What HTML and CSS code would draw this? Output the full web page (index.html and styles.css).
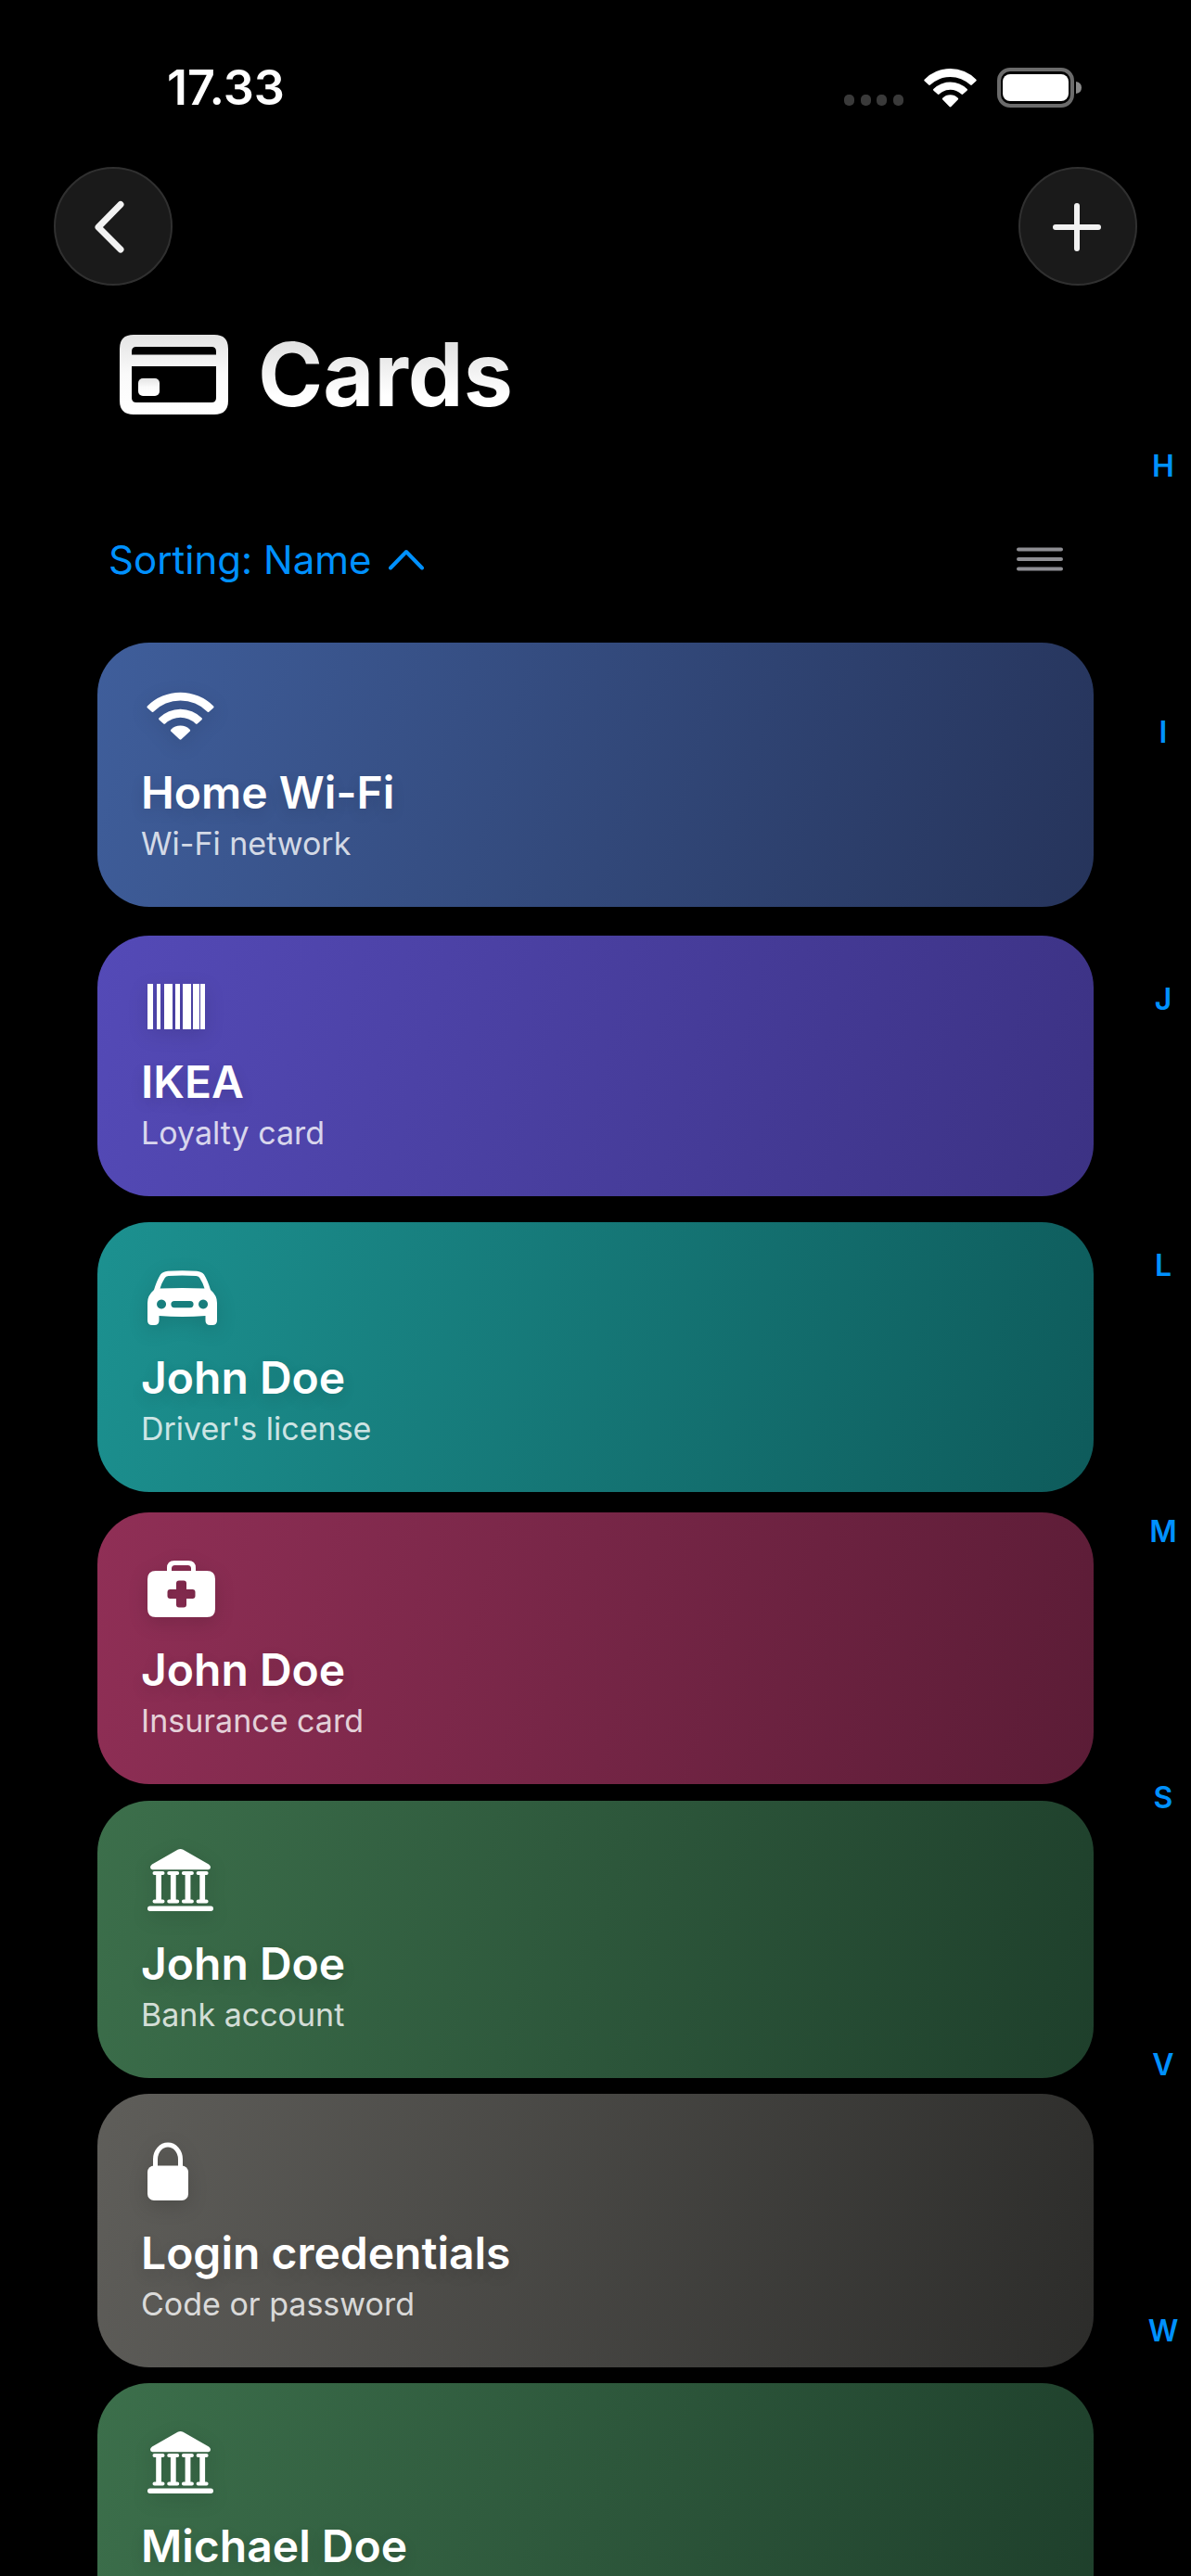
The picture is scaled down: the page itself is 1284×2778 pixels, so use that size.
FILE: index.html
```html
<!DOCTYPE html>
<html lang="en">
<head>
<meta charset="utf-8">
<meta name="viewport" content="width=device-width, initial-scale=1">
<title>Cards</title>
<link rel="stylesheet" href="styles.css">
</head>
<body>
<div class="screen">
  <div class="status">
    <span class="status-time">17.33</span>
    <div class="status-icons">
      <svg width="64" height="14" viewBox="0 0 64 14" fill="#3a3a3a" aria-hidden="true"><rect width="11" height="12" rx="5"/><rect x="18" width="11" height="12" rx="5"/><rect x="35" width="11" height="12" rx="5"/><rect x="53" width="11" height="12" rx="5"/></svg>
      <svg width="57" height="42" viewBox="0 0 57 42" fill="#fff" aria-hidden="true"><path d="M.6 11.800Q-.2 12.700.8 13.600L5.200 17.600Q6 18.300 6.900 17.500A31.500 31.500 0 0 1 50.100 17.500Q51 18.300 51.800 17.600L56.200 13.600Q57.200 12.700 56.400 11.800A39 39 0 0 0 .6 11.800z"/><path d="M10.300 22Q9.600 23 10.500 23.800L14.800 27.600Q15.700 28.300 16.600 27.500A17.500 17.500 0 0 1 40.400 27.500Q41.300 28.300 42.200 27.600L46.500 23.800Q47.400 23 46.700 22A26 26 0 0 0 10.300 22z"/><path d="M20.200 31.700Q19.400 32.600 20.300 33.500L27.600 41Q28.500 41.900 29.400 41L36.700 33.500Q37.600 32.600 36.800 31.700A12 12 0 0 0 20.200 31.700z"/></svg>
      <svg width="92" height="43" viewBox="0 0 92 43" aria-hidden="true"><rect x="2" y="2" width="79" height="39" rx="12" fill="none" stroke="#6b6b6b" stroke-width="4"/><rect x="6" y="7" width="71" height="29" rx="8" fill="#fff"/><path d="M85 15q6 1 6 6.500t-6 6.500z" fill="#8a8a8a"/></svg>
    </div>
  </div>

  <header class="toolbar">
    <button class="round-btn" type="button" aria-label="Back">
      <svg width="60" height="60" viewBox="0 0 60 60" fill="none" stroke="#f2f2f2" stroke-width="7" stroke-linecap="round" stroke-linejoin="round"><path d="M38 6.500 14 31 38 55"/></svg>
    </button>
    <button class="round-btn" type="button" aria-label="Add card">
      <svg width="60" height="60" viewBox="0 0 60 60" fill="none" stroke="#f2f2f2" stroke-width="6" stroke-linecap="round"><path d="M29 8v46M6 31h46"/></svg>
    </button>
  </header>

  <div class="content">
    <main class="main">
      <h1 class="title">
        <svg width="117" height="86" viewBox="0 0 117 86" fill="url(#fade)" fill-rule="evenodd" aria-hidden="true"><defs><linearGradient id="fade" x1="0" y1="0" x2="0" y2="1"><stop offset="0" stop-color="#e4e4e4"/><stop offset=".5" stop-color="#fafafa"/><stop offset="1" stop-color="#fff"/></linearGradient></defs><path d="M15 0h87q15 0 15 15v56q0 15-15 15H15Q0 86 0 71V15Q0 0 15 0zM13 21.500h91V18q0-5-5-5H18q-5 0-5 5zM13 34v34q0 5 5 5h81q5 0 5-5V34z"/><rect x="20" y="47" width="23" height="19" rx="5"/></svg>
        <span class="title-text">Cards</span>
      </h1>

      <div class="sort">
        <button class="sort-btn" type="button">Sorting: Name
          <svg width="38" height="23" viewBox="0 0 38 23" fill="none" stroke="currentColor" stroke-width="4" stroke-linecap="round" stroke-linejoin="round" aria-hidden="true"><path d="M2 20.500 19 3 36 20.500"/></svg>
        </button>
        <button class="menu-btn" type="button" aria-label="Change layout">
          <svg width="50" height="26" viewBox="0 0 50 26" stroke="#8e8e93" stroke-width="4" stroke-linecap="round"><path d="M2 2.500h46M2 13h46M2 23.500h46"/></svg>
        </button>
      </div>

      <ul class="cards">
        <li class="row"><a class="card blue" href="#home-wifi">
          <svg class="icon" width="73" height="53" viewBox="0 0 73 53" aria-hidden="true"><path d="M.8 16.500Q0 17.500 1 18.500L5.500 22.500Q6.500 23.400 7.500 22.400A41 41 0 0 1 65.500 22.400Q66.500 23.400 67.500 22.500L72 18.500Q73 17.500 72.200 16.500A50.500 50.500 0 0 0 .8 16.500z"/><path d="M13.400 29.300Q12.600 30.300 13.500 31.200L18.300 35.500Q19.300 36.300 20.300 35.300A23.500 23.500 0 0 1 52.700 35.300Q53.700 36.300 54.700 35.500L59.500 31.200Q60.400 30.300 59.600 29.300A32.500 32.500 0 0 0 13.400 29.300z"/><path d="M26.300 41.700Q25.400 42.800 26.400 43.800L35.500 52.300Q36.500 53.200 37.500 52.300L46.600 43.800Q47.600 42.800 46.700 41.700A14.500 14.500 0 0 0 26.300 41.700z"/></svg>
          <span class="name">Home Wi-Fi</span><span class="kind">Wi-Fi network</span></a></li>
        <li class="row"><a class="card violet" href="#ikea">
          <svg class="icon" width="64" height="49" viewBox="0 0 64 49" aria-hidden="true"><path d="M1 0h6v49H1zM11 0h4v49h-4zM19 0h9v49h-9zM31 0h5v49h-5zM39 0h9v49h-9zM50 0h7v49h-7zM58 0h5v49h-5z"/></svg>
          <span class="name">IKEA</span><span class="kind">Loyalty card</span></a></li>
        <li class="row"><a class="card teal" href="#license">
          <svg class="icon" width="77" height="59" viewBox="0 0 77 59" aria-hidden="true"><path fill-rule="evenodd" d="M8 21Q11 11 15 4.500Q17.500 1.200 23 .8Q38.500-.5 54 .8Q59.500 1.200 62 4.500Q66 11 69 21Q76 27 76 35V54Q76 59 71 59H68.500Q63.500 59 63.500 54V49Q38.500 51 13.500 49V54Q13.500 59 8.500 59H6Q1 59 1 54V35Q1 27 8 21zM14.500 19.500Q38.500 18.300 62.500 19.500Q60.500 13 57.500 8.500Q56.500 6.300 53.500 6Q38.500 5 23.500 6Q20.500 6.300 19.500 8.500Q16.500 13 14.500 19.500zM16 31.500a5 5 0 1 0 .1 0zM61 31.500a5 5 0 1 0 .1 0zM30 33a3.600 3.600 0 0 0 0 7.200h17a3.600 3.600 0 0 0 0-7.200z"/></svg>
          <span class="name">John Doe</span><span class="kind">Driver's license</span></a></li>
        <li class="row"><a class="card wine" href="#insurance">
          <svg class="icon" width="75" height="61" viewBox="0 0 75 61" aria-hidden="true"><path fill-rule="evenodd" d="M22 11V8Q22 0 30 0h15q8 0 8 8v3h12q9 0 9 9v32q0 9-9 9H10q-9 0-9-9V20q0-9 9-9zM27 11h21V8.500Q48 5 44.500 5h-14Q27 5 27 8.500zM35 21.500q-3 0-3 3V31h-6.500q-3 0-3 3v4q0 3 3 3H32v6.500q0 3 3 3h5q3 0 3-3V41h6.500q3 0 3-3v-4q0-3-3-3H43v-6.500q0-3-3-3z"/></svg>
          <span class="name">John Doe</span><span class="kind">Insurance card</span></a></li>
        <li class="row"><a class="card green" href="#bank-john">
          <svg class="icon" width="73" height="67" viewBox="0 0 73 67" aria-hidden="true"><g id="bank"><path d="M33.500.8q3-1.600 6 0L67 16.500q2 1.300 2 3.300 0 2.400-2.500 2.400h-60Q4 22.200 4 19.800q0-2 2-3.300z"/><rect x="1" y="61.500" width="71" height="5.500" rx="2.700"/><path id="pillar" d="M8.500 24h9a2 2 0 0 1 0 4H16v26.500h1.500a2 2 0 0 1 0 4h-9a2 2 0 0 1 0-4H10.200V28H8.500a2 2 0 0 1 0-4z"/><use href="#pillar" x="15.700"/><use href="#pillar" x="31.400"/><use href="#pillar" x="47.100"/></g></svg>
          <span class="name">John Doe</span><span class="kind">Bank account</span></a></li>
        <li class="row"><a class="card gray" href="#login">
          <svg class="icon" width="46" height="63" viewBox="0 0 46 63" aria-hidden="true"><path d="M9.500 30V18.500a13.500 15.500 0 0 1 27 0V30" fill="none" stroke="#fff" stroke-width="5"/><rect x="1" y="25.500" width="44" height="37.500" rx="7"/></svg>
          <span class="name">Login credentials</span><span class="kind">Code or password</span></a></li>
        <li class="row"><a class="card green" href="#bank-michael">
          <svg class="icon" width="73" height="67" viewBox="0 0 73 67" aria-hidden="true"><use href="#bank"/></svg>
          <span class="name">Michael Doe</span><span class="kind">Bank account</span></a></li>
      </ul>
    </main>

    <nav class="index" aria-label="Jump to letter">
      <a href="#h">H</a><a href="#i">I</a><a href="#j">J</a><a href="#l">L</a><a href="#m">M</a><a href="#s">S</a><a href="#v">V</a><a href="#w">W</a>
    </nav>
  </div>
</div>
</body>
</html>
```
FILE: styles.css
```css
* { box-sizing: border-box; }

body {
  margin: 0;
  background: #000;
  color: #fff;
  font-family: Inter, "Liberation Sans", sans-serif;
}

button {
  padding: 0;
  border: 0;
  background: none;
  color: inherit;
  font: inherit;
  cursor: pointer;
}

a { color: inherit; text-decoration: none; }
svg { display: block; flex: none; }

.screen {
  display: flex;
  flex-direction: column;
  height: 100vh;
  overflow: hidden;
}

/* Status bar */
.status {
  display: flex;
  flex: none;
  justify-content: space-between;
  align-items: center;
  height: 180px;
  padding: 8px 117px 0 180px;
}
.status-time { font-size: 52px; font-weight: 600; }
.status-icons { display: flex; align-items: flex-end; gap: 22px; }

/* Toolbar */
.toolbar {
  display: flex;
  flex: none;
  justify-content: space-between;
  padding: 0 58px;
}
.round-btn {
  display: flex;
  align-items: center;
  justify-content: center;
  width: 128px;
  height: 128px;
  border: 2px solid #303030;
  border-radius: 50%;
  background: #1a1a1a;
}

/* Content and letter index */
.content {
  display: grid;
  grid-template-columns: 1fr 60px;
  flex: 1;
  min-height: 0;
}
.main {
  min-height: 0;
  padding: 41px 45px 0 105px;
  overflow: hidden;
}

.title {
  display: flex;
  align-items: center;
  gap: 32px;
  height: 110px;
  margin: 0;
  padding-left: 24px;
  font-size: 95px;
  font-weight: 700;
  line-height: 110px;
}
.title-text {
  background: linear-gradient(#e2e2e2 20%, #fff 70%);
  background-clip: text;
  color: transparent;
}

.sort {
  display: flex;
  align-items: center;
  justify-content: space-between;
  height: 60px;
  margin: 114px 0 45px;
  padding: 0 33px 0 12px;
}
.sort-btn {
  display: flex;
  align-items: center;
  gap: 18px;
  color: #0091ff;
  font-size: 42px;
}

.cards { margin: 0; padding: 0; list-style: none; }
.row { display: flex; align-items: center; min-height: 314px; }
.card {
  display: flex;
  flex: 1;
  flex-direction: column;
  padding: 52px 47px 45px;
  border-radius: 56px;
}
.icon {
  margin: 0 0 25px 6px;
  fill: #fff;
  filter: drop-shadow(0 6px 10px rgba(0, 0, 0, .14));
}
.name {
  font-size: 48px;
  font-weight: 600;
  line-height: 64px;
  text-shadow: 0 6px 16px rgba(0, 0, 0, .12);
}
.kind {
  color: rgba(255, 255, 255, .8);
  font-size: 34px;
  line-height: 46px;
}

.blue { background: linear-gradient(105deg, #3f5e9b, #26345b); }
.violet { background: linear-gradient(105deg, #544ab7, #3c3284); }
.teal { background: linear-gradient(105deg, #1c9190, #0e5b5b); }
.wine { background: linear-gradient(105deg, #902f56, #5b1c36); }
.green { background: linear-gradient(105deg, #3c6f4b, #1e3f2b); }
.gray { background: linear-gradient(105deg, #5f5e5a, #2c2c2a); }

.index {
  display: flex;
  flex-direction: column;
  padding: 51px 0 121px;
  color: #0091ff;
  font-size: 32px;
  font-weight: 600;
}
.index a {
  display: flex;
  flex: 1;
  align-items: center;
  justify-content: center;
}
```
